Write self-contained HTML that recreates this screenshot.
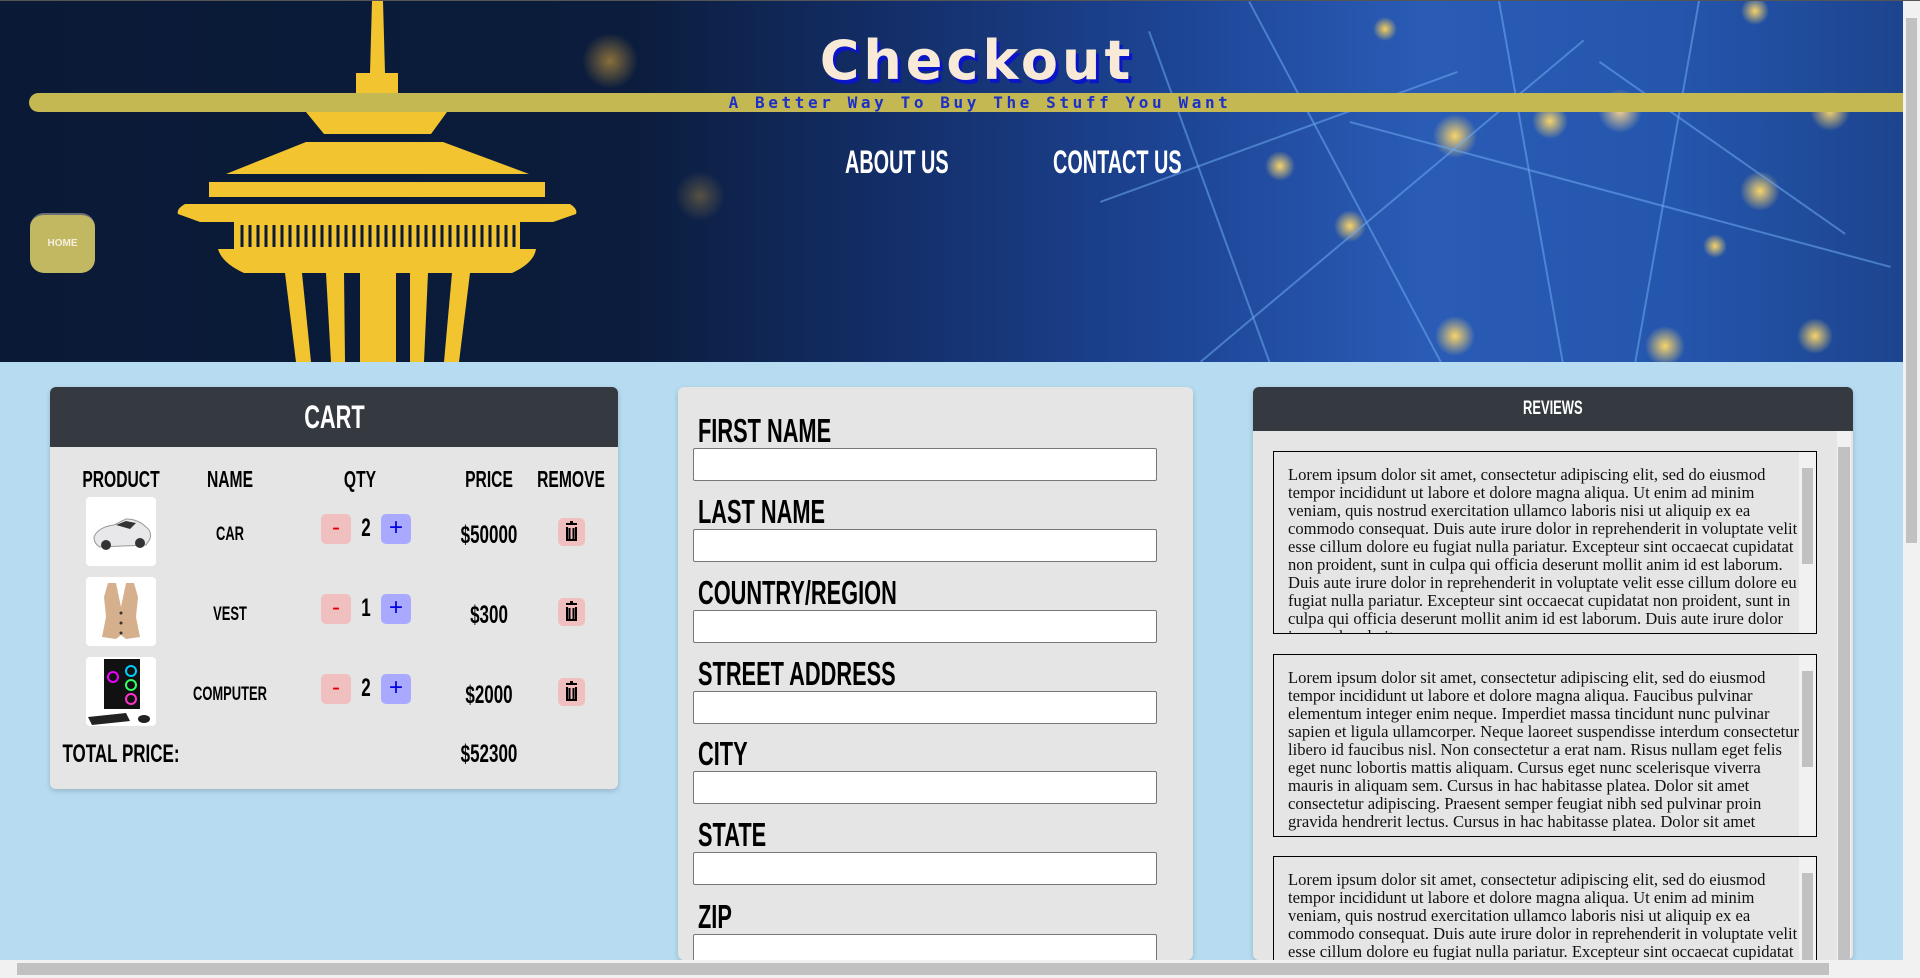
<!DOCTYPE html>
<html><head><meta charset="utf-8"><style>
*{box-sizing:border-box;margin:0;padding:0}
html,body{width:1920px;height:978px;overflow:hidden;background:#b7dcf1}
#root{position:relative;width:1920px;height:978px;overflow:hidden;font-family:"Liberation Sans",sans-serif}
.bb{font-family:"Liberation Sans",sans-serif;font-weight:bold;text-transform:uppercase;display:inline-block;white-space:nowrap}
#hdr{position:absolute;left:0;top:1px;width:1903px;height:361px;overflow:hidden;
background:
radial-gradient(circle at 610px 60px,rgba(240,180,60,.55) 0,rgba(240,180,60,0) 28px),
radial-gradient(circle at 700px 195px,rgba(220,170,60,.35) 0,rgba(0,0,0,0) 25px),
radial-gradient(circle at 1385px 28px,#f6cf5a 0,rgba(246,207,90,0) 12px),
radial-gradient(circle at 1455px 135px,#f8d36a 0,rgba(0,0,0,0) 22px),
radial-gradient(circle at 1550px 120px,#f8d36a 0,rgba(0,0,0,0) 18px),
radial-gradient(circle at 1620px 110px,#f1d090 0,rgba(0,0,0,0) 22px),
radial-gradient(circle at 1760px 190px,#f8d36a 0,rgba(0,0,0,0) 20px),
radial-gradient(circle at 1830px 110px,#f8d36a 0,rgba(0,0,0,0) 20px),
radial-gradient(circle at 1350px 225px,#f8d36a 0,rgba(0,0,0,0) 16px),
radial-gradient(circle at 1715px 245px,#f8d36a 0,rgba(0,0,0,0) 12px),
radial-gradient(circle at 1455px 335px,#f8d36a 0,rgba(0,0,0,0) 20px),
radial-gradient(circle at 1665px 345px,#f8d36a 0,rgba(0,0,0,0) 20px),
radial-gradient(circle at 1815px 335px,#f8d36a 0,rgba(0,0,0,0) 18px),
radial-gradient(circle at 1280px 165px,#f8d36a 0,rgba(0,0,0,0) 15px),
radial-gradient(circle at 1755px 10px,#f8d36a 0,rgba(0,0,0,0) 14px),
linear-gradient(90deg,#0a1a36 0,#0b1c3c 33%,#14306c 48%,#1d4596 62%,#2a5cb6 75%,#2456ad 88%,#1d448e 100%)}
.line{position:absolute;height:2px;background:rgba(110,170,240,.55);transform-origin:0 0}
#band{position:absolute;left:29px;top:92px;width:1874px;height:19px;background:#c3b852;border-radius:10px 0 0 10px}
#title{position:absolute;left:0;width:1954px;top:28px;text-align:center;font-family:"DejaVu Sans","Liberation Sans",sans-serif;font-weight:bold;font-size:54px;letter-spacing:4px;color:#f9ead8;text-shadow:3px 4px 0 #0a14c8}
#sub{position:absolute;left:0;width:1960px;top:92px;text-align:center;font-family:"DejaVu Sans Mono","Liberation Mono",monospace;font-weight:bold;font-size:16px;letter-spacing:3.6px;color:#1b2fc9;line-height:19px}
.nav{position:absolute;top:143px;font-size:32px;color:#fff;transform:scaleX(.62);transform-origin:0 0}
#home{position:absolute;left:30px;top:212px;width:65px;height:60px;border-radius:14px;background:#c3b862;border-top:2px solid #6b6e74;color:#f4eedd;font-size:10px;text-align:center;line-height:58px;font-weight:bold;font-family:"Liberation Sans",sans-serif}
.card{position:absolute;background:#e5e5e5;border-radius:6px;box-shadow:0 2px 6px rgba(0,0,0,.18);overflow:hidden}
.ch{background:#343a40;color:#fff;text-align:center}
.col{position:absolute;font-size:23px;color:#000;transform:translateX(-50%) scaleX(.68);transform-origin:50% 0}
.img{position:absolute;left:86px;width:70px;height:69px;background:#fff;border-radius:4px;overflow:hidden}
.qb{position:absolute;width:30px;height:30px;border-radius:5px;text-align:center;line-height:28px;font-family:"Liberation Sans",sans-serif;font-size:24px}
.mi{background:#f0c0c0;color:#e00000}
.pl{background:#a9a9ff;color:#0000e0}
.tr{position:absolute;left:558px;width:27px;height:28px;border-radius:5px;background:#f0c0c0}
.lab{position:absolute;left:698px;font-size:33px;color:#000;transform:scaleX(.66);transform-origin:0 0}
.inp{position:absolute;left:693px;width:464px;height:33px;background:#fff;border:1px solid #777;border-radius:2px}
.rev{position:absolute;left:1273px;width:544px;height:183px;border:1px solid #000;overflow:hidden;background:#e5e5e5}
.rev p{font-family:"Liberation Serif",serif;font-size:16.6px;line-height:18px;color:#111;padding:14px 17px 0 14px}
.sb{position:absolute;right:0;top:0;width:17px;height:100%;background:#f1f1f1}
.sb .th{position:absolute;left:3px;right:3px;top:16px;height:96px;background:#c1c1c1}
</style></head><body><div id="root">
<div id="hdr">
<div class="line" style="left:1250px;top:0;width:420px;transform:rotate(62deg)"></div>
<div class="line" style="left:1500px;top:0;width:400px;transform:rotate(80deg)"></div>
<div class="line" style="left:1350px;top:120px;width:560px;transform:rotate(15deg)"></div>
<div class="line" style="left:1200px;top:360px;width:500px;transform:rotate(-40deg)"></div>
<div class="line" style="left:1600px;top:60px;width:300px;transform:rotate(35deg)"></div>
<div class="line" style="left:1100px;top:200px;width:380px;transform:rotate(-20deg)"></div>
<div class="line" style="left:1700px;top:0;width:380px;transform:rotate(100deg)"></div>
<div class="line" style="left:1150px;top:30px;width:360px;transform:rotate(70deg)"></div>
<div id="band"></div>
<svg style="position:absolute;left:0;top:0" width="700" height="361" viewBox="0 0 700 361">
<g fill="#f2c530">
<polygon points="372,0 383,0 385,72 370,72"/>
<rect x="356" y="72" width="42" height="20"/>
<polygon points="306,111 447,111 431,133 324,133"/>
<polygon points="306,141 443,141 529,173 226,173"/>
<polygon points="209,181 545,181 545,196 209,196"/>
<path d="M185,203 L570,203 Q578,208 576,213 L553,221 L200,221 L178,213 Q176,208 185,203Z"/>
<rect x="234" y="221" width="286" height="27"/>
<path d="M218,248 L536,248 Q534,262 512,272 L244,272 Q222,262 218,248Z"/>
<polygon points="285,272 302,272 311,361 296,361"/>
<polygon points="326,272 344,272 345,361 331,361"/>
<polygon points="360,272 396,272 396,361 360,361"/>
<polygon points="410,272 428,272 424,361 410,361"/>
<polygon points="452,272 470,272 459,361 444,361"/>
</g>
<g stroke="#0a1a36" stroke-width="3">
<line x1="242" y1="224" x2="242" y2="246"/><line x1="250" y1="224" x2="250" y2="246"/><line x1="258" y1="224" x2="258" y2="246"/><line x1="266" y1="224" x2="266" y2="246"/><line x1="274" y1="224" x2="274" y2="246"/><line x1="282" y1="224" x2="282" y2="246"/><line x1="290" y1="224" x2="290" y2="246"/><line x1="298" y1="224" x2="298" y2="246"/><line x1="306" y1="224" x2="306" y2="246"/><line x1="314" y1="224" x2="314" y2="246"/><line x1="322" y1="224" x2="322" y2="246"/><line x1="330" y1="224" x2="330" y2="246"/><line x1="338" y1="224" x2="338" y2="246"/><line x1="346" y1="224" x2="346" y2="246"/><line x1="354" y1="224" x2="354" y2="246"/><line x1="362" y1="224" x2="362" y2="246"/><line x1="370" y1="224" x2="370" y2="246"/><line x1="378" y1="224" x2="378" y2="246"/><line x1="386" y1="224" x2="386" y2="246"/><line x1="394" y1="224" x2="394" y2="246"/><line x1="402" y1="224" x2="402" y2="246"/><line x1="410" y1="224" x2="410" y2="246"/><line x1="418" y1="224" x2="418" y2="246"/><line x1="426" y1="224" x2="426" y2="246"/><line x1="434" y1="224" x2="434" y2="246"/><line x1="442" y1="224" x2="442" y2="246"/><line x1="450" y1="224" x2="450" y2="246"/><line x1="458" y1="224" x2="458" y2="246"/><line x1="466" y1="224" x2="466" y2="246"/><line x1="474" y1="224" x2="474" y2="246"/><line x1="482" y1="224" x2="482" y2="246"/><line x1="490" y1="224" x2="490" y2="246"/><line x1="498" y1="224" x2="498" y2="246"/><line x1="506" y1="224" x2="506" y2="246"/><line x1="514" y1="224" x2="514" y2="246"/>
</g>
</svg>
<div id="title">Checkout</div>
<div id="sub">A Better Way To Buy The Stuff You Want</div>
<div class="nav bb" style="left:845px">About Us</div>
<div class="nav bb" style="left:1053px">Contact Us</div>
<div id="home">HOME</div>
</div>
<div style="position:absolute;left:0;top:0;width:1920px;height:1px;background:#555"></div>

<!-- CART -->
<div class="card" style="left:50px;top:387px;width:568px;height:402px">
<div class="ch" style="height:60px;line-height:60px"><span class="bb" style="font-size:32px;transform:scaleX(.68)">Cart</span></div>
</div>
<div class="col bb" style="left:121px;top:466px">Product</div>
<div class="col bb" style="left:230px;top:466px">Name</div>
<div class="col bb" style="left:360px;top:466px">Qty</div>
<div class="col bb" style="left:489px;top:466px">Price</div>
<div class="col bb" style="left:571px;top:466px">Remove</div>

<div class="img" style="top:497px"><svg width="70" height="69"><path d="M8,40 Q12,30 28,28 L40,22 Q52,22 60,30 Q66,34 64,42 L60,48 L14,50 Q8,47 8,40Z" fill="#e8e8ea" stroke="#999" stroke-width="1"/><path d="M30,28 L40,24 L50,26 L44,32Z" fill="#333"/><circle cx="20" cy="48" r="5" fill="#333"/><circle cx="54" cy="46" r="5" fill="#333"/></svg></div>
<div class="img" style="top:577px"><svg width="70" height="69"><path d="M22,6 L30,6 L35,30 L40,6 L48,6 L52,20 L50,40 L54,60 L40,62 L35,58 L30,62 L16,60 L20,40 L18,20Z" fill="#d6b08c"/><circle cx="35" cy="36" r="1.5" fill="#333"/><circle cx="35" cy="46" r="1.5" fill="#333"/><circle cx="35" cy="56" r="1.5" fill="#333"/></svg></div>
<div class="img" style="top:657px"><svg width="70" height="69"><rect x="18" y="2" width="36" height="50" fill="#111"/><circle cx="27" cy="20" r="5" fill="none" stroke="#e0f" stroke-width="2"/><circle cx="45" cy="14" r="5" fill="none" stroke="#0cf" stroke-width="2"/><circle cx="45" cy="28" r="5" fill="none" stroke="#3f6" stroke-width="2"/><circle cx="45" cy="42" r="5" fill="none" stroke="#f3c" stroke-width="2"/><path d="M2,60 L40,56 L44,64 L6,68Z" fill="#222"/><ellipse cx="58" cy="62" rx="6" ry="4" fill="#222"/></svg></div>

<div class="col bb" style="left:230px;top:524px;font-size:19px">Car</div>
<div class="col bb" style="left:230px;top:604px;font-size:19px">Vest</div>
<div class="col bb" style="left:230px;top:684px;font-size:19px">Computer</div>

<div class="qb mi" style="left:321px;top:514px">-</div><div class="col bb" style="left:366px;top:514px;font-size:25px">2</div><div class="qb pl" style="left:381px;top:514px">+</div>
<div class="qb mi" style="left:321px;top:594px">-</div><div class="col bb" style="left:366px;top:594px;font-size:25px">1</div><div class="qb pl" style="left:381px;top:594px">+</div>
<div class="qb mi" style="left:321px;top:674px">-</div><div class="col bb" style="left:366px;top:674px;font-size:25px">2</div><div class="qb pl" style="left:381px;top:674px">+</div>

<div class="col bb" style="left:489px;top:521px;font-size:25px">$50000</div>
<div class="col bb" style="left:489px;top:601px;font-size:25px">$300</div>
<div class="col bb" style="left:489px;top:681px;font-size:25px">$2000</div>

<div class="tr" style="top:518px"><svg width="27" height="28"><path d="M8,6 h11 M12,4 h3 M9,9 v13 h9 v-13 M11.5,10 v11 M15.5,10 v11" stroke="#000" stroke-width="2" fill="none"/></svg></div>
<div class="tr" style="top:598px"><svg width="27" height="28"><path d="M8,6 h11 M12,4 h3 M9,9 v13 h9 v-13 M11.5,10 v11 M15.5,10 v11" stroke="#000" stroke-width="2" fill="none"/></svg></div>
<div class="tr" style="top:678px"><svg width="27" height="28"><path d="M8,6 h11 M12,4 h3 M9,9 v13 h9 v-13 M11.5,10 v11 M15.5,10 v11" stroke="#000" stroke-width="2" fill="none"/></svg></div>

<div class="col bb" style="left:121px;top:740px;font-size:25px">Total Price:</div>
<div class="col bb" style="left:489px;top:740px;font-size:25px">$52300</div>

<!-- FORM -->
<div class="card" style="left:678px;top:387px;width:515px;height:573px"></div>
<div class="lab bb" style="top:412px">First Name</div><div class="inp" style="top:448px"></div>
<div class="lab bb" style="top:493px">Last Name</div><div class="inp" style="top:529px"></div>
<div class="lab bb" style="top:574px">Country/Region</div><div class="inp" style="top:610px"></div>
<div class="lab bb" style="top:655px">Street Address</div><div class="inp" style="top:691px"></div>
<div class="lab bb" style="top:735px">City</div><div class="inp" style="top:771px"></div>
<div class="lab bb" style="top:816px">State</div><div class="inp" style="top:852px"></div>
<div class="lab bb" style="top:898px">Zip</div><div class="inp" style="top:934px;height:26px;border-bottom:none;border-radius:2px 2px 0 0"></div>

<!-- REVIEWS -->
<div class="card" style="left:1253px;top:387px;width:600px;height:573px">
<div class="ch" style="height:44px;line-height:44px"><span class="bb" style="font-size:19px;transform:scaleX(.68)">Reviews</span></div>
<div style="position:absolute;right:2px;top:44px;width:14px;height:529px;background:#f1f1f1"><div style="position:absolute;left:1px;right:1px;top:16px;bottom:0;background:#c1c1c1"></div></div>
</div>
<div class="rev" style="top:451px"><p>Lorem ipsum dolor sit amet, consectetur adipiscing elit, sed do eiusmod tempor incididunt ut labore et dolore magna aliqua. Ut enim ad minim veniam, quis nostrud exercitation ullamco laboris nisi ut aliquip ex ea commodo consequat. Duis aute irure dolor in reprehenderit in voluptate velit esse cillum dolore eu fugiat nulla pariatur. Excepteur sint occaecat cupidatat non proident, sunt in culpa qui officia deserunt mollit anim id est laborum. Duis aute irure dolor in reprehenderit in voluptate velit esse cillum dolore eu fugiat nulla pariatur. Excepteur sint occaecat cupidatat non proident, sunt in culpa qui officia deserunt mollit anim id est laborum. Duis aute irure dolor in reprehenderit</p><div class="sb"><div class="th"></div></div></div>
<div class="rev" style="top:654px"><p>Lorem ipsum dolor sit amet, consectetur adipiscing elit, sed do eiusmod tempor incididunt ut labore et dolore magna aliqua. Faucibus pulvinar elementum integer enim neque. Imperdiet massa tincidunt nunc pulvinar sapien et ligula ullamcorper. Neque laoreet suspendisse interdum consectetur libero id faucibus nisl. Non consectetur a erat nam. Risus nullam eget felis eget nunc lobortis mattis aliquam. Cursus eget nunc scelerisque viverra mauris in aliquam sem. Cursus in hac habitasse platea. Dolor sit amet consectetur adipiscing. Praesent semper feugiat nibh sed pulvinar proin gravida hendrerit lectus. Cursus in hac habitasse platea. Dolor sit amet</p><div class="sb"><div class="th"></div></div></div>
<div class="rev" style="top:856px;height:104px;border-bottom:none"><p>Lorem ipsum dolor sit amet, consectetur adipiscing elit, sed do eiusmod tempor incididunt ut labore et dolore magna aliqua. Ut enim ad minim veniam, quis nostrud exercitation ullamco laboris nisi ut aliquip ex ea commodo consequat. Duis aute irure dolor in reprehenderit in voluptate velit esse cillum dolore eu fugiat nulla pariatur. Excepteur sint occaecat cupidatat</p><div class="sb"><div class="th"></div></div></div>

<!-- page scrollbars -->
<div style="position:absolute;left:1903px;top:1px;width:17px;height:959px;background:#f1f1f1"><div style="position:absolute;left:3px;right:3px;top:17px;height:525px;background:#c1c1c1"></div></div>
<div style="position:absolute;left:0;top:960px;width:1920px;height:18px;background:#f1f1f1"><div style="position:absolute;left:17px;top:3px;width:1812px;height:12px;background:#c1c1c1"></div></div>
</div></body></html>
